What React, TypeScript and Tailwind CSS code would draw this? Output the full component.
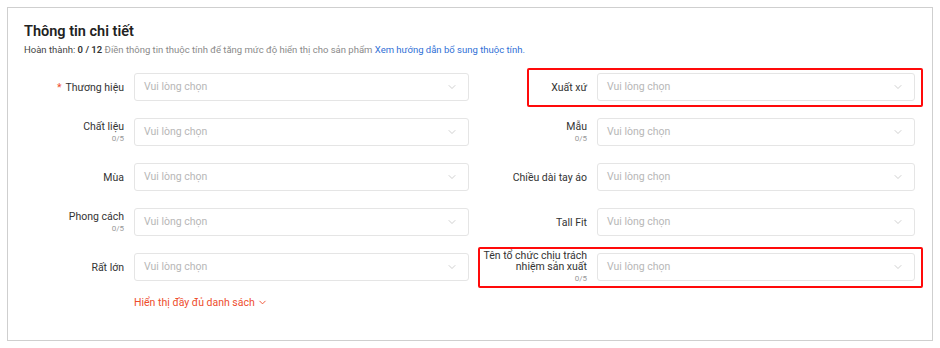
import { ChevronDown } from "lucide-react";

// one attribute row: right-aligned label + select box
interface FieldProps {
  label: string;
  required?: boolean;
  counter?: string;
  labelWidth: string;
  inputWidth: string;
}

function Field({ label, required, counter, labelWidth, inputWidth }: FieldProps) {
  return (
    <div className="flex h-[28px] items-center">
      <div className={`${labelWidth} shrink-0 text-right leading-[11px]`}>
        <div className="text-[10.5px] text-[#333]">
          {required ? <span className="mr-1 text-[#ee4d2d]">*</span> : null}
          {label}
        </div>
        {counter ? <div className="mt-[1px] text-[8px] text-[#999]">{counter}</div> : null}
      </div>
      <div
        className={`${inputWidth} ml-[10px] flex h-[28px] shrink-0 items-center justify-between rounded-[3px] border border-[#e5e5e5] bg-white pl-[9px] pr-[10px]`}
      >
        <span className="text-[10.5px] text-[#b7b7b7]">Vui lòng chọn</span>
        <ChevronDown size={12} strokeWidth={1.4} className="text-[#bcbcbc]" />
      </div>
    </div>
  );
}

const leftFields = [
  { label: "Thương hiệu", required: true },
  { label: "Chất liệu", counter: "0/5" },
  { label: "Mùa" },
  { label: "Phong cách", counter: "0/5" },
  { label: "Rất lớn" },
];

const rightFields = [
  { label: "Xuất xứ" },
  { label: "Mẫu", counter: "0/5" },
  { label: "Chiều dài tay áo" },
  { label: "Tall Fit" },
  { label: "Tên tổ chức chịu trách nhiệm sản xuất", counter: "0/5" },
];

export default function App() {
  return (
    <div className="h-[348px] w-[940px] bg-white pl-[7px] pt-[7px] font-[Roboto,Arial,sans-serif]">
      <div className="relative h-[334px] w-[926px] border border-[#cfcfcf] pl-[16px] pt-[15px]">
        <h2 className="text-[14.5px] font-semibold leading-[18px] text-[#222]">Thông tin chi tiết</h2>
        <p className="mt-[3px] text-[9.5px] leading-[12px] text-[#8a8a8a]">
          <span className="text-[#444]">Hoàn thành: </span>
          <span className="font-semibold text-[#333]">0 / 12</span> Điền thông tin thuộc tính để tăng mức độ hiển thị cho sản phẩm{" "}
          <span className="text-[#2f6fd6]">Xem hướng dẫn bổ sung thuộc tính.</span>
        </p>

        <div className="mt-[17px] flex gap-[12px]">
          <div className="flex flex-col gap-[17px]">
            {leftFields.map((f) => (
              <Field key={f.label} {...f} labelWidth="w-[100px]" inputWidth="w-[335px]" />
            ))}
          </div>
          <div className="flex flex-col gap-[17px]">
            {rightFields.map((f) => (
              <Field key={f.label} {...f} labelWidth="w-[106px]" inputWidth="w-[318px]" />
            ))}
          </div>
        </div>

        <button className="ml-[110px] mt-[14px] flex items-center gap-[2px] text-[10.5px] text-[#ee4d2d]">
          Hiển thị đầy đủ danh sách
          <ChevronDown size={11} strokeWidth={2} />
        </button>

        {/* red annotation boxes */}
        <div className="absolute left-[519px] top-[60px] h-[39px] w-[396px] rounded-[2px] border-2 border-[#ff0a0a]" />
        <div className="absolute left-[470px] top-[239px] h-[41px] w-[445px] rounded-[2px] border-2 border-[#ff0a0a]" />
      </div>
    </div>
  );
}
